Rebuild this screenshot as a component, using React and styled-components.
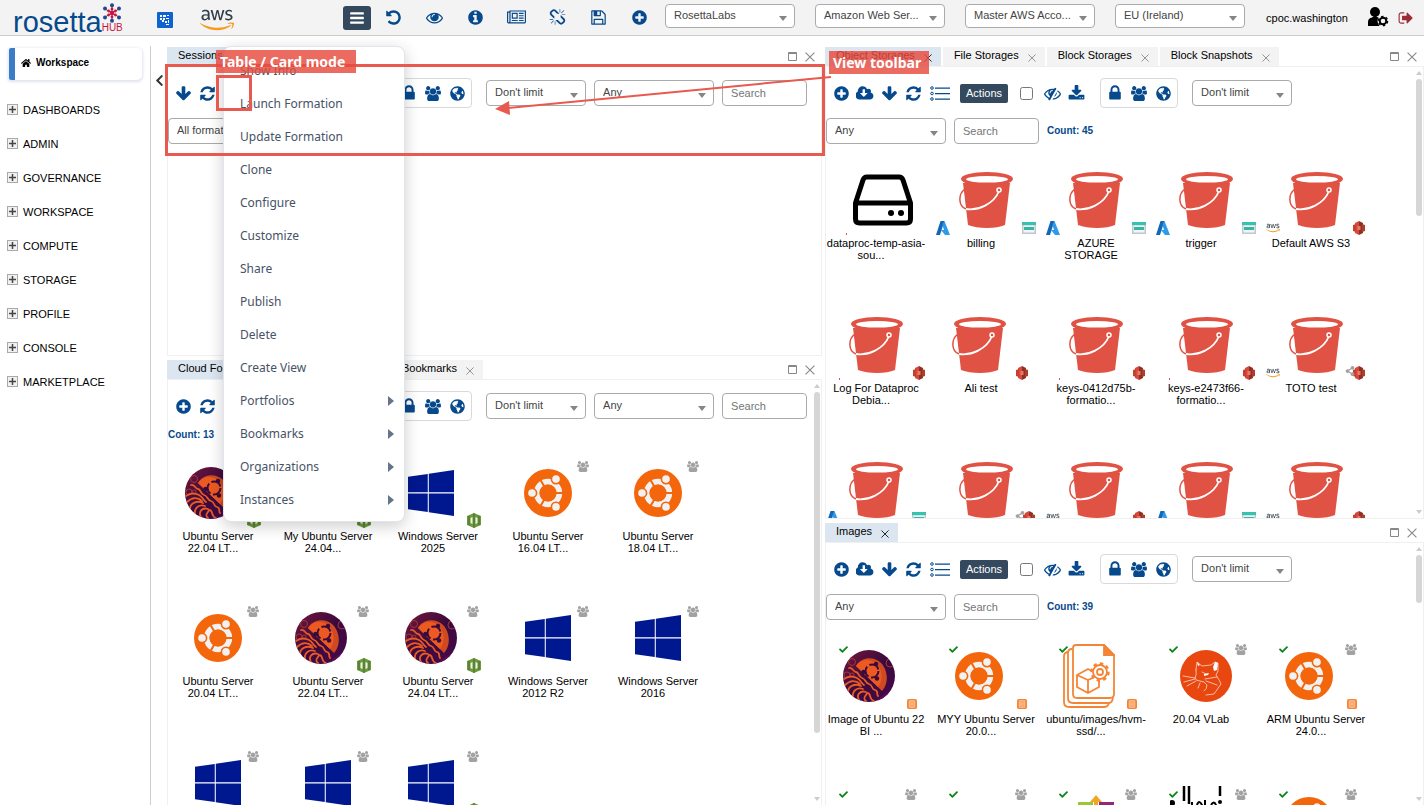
import React from "react";
import styled, { createGlobalStyle, css } from "styled-components";
import { FaAws, FaCheck, FaChevronLeft, FaGlobeAmericas, FaHome, FaShareAlt } from "react-icons/fa";

const blue = "#06498c";
const slate = "#34495e";
const note = "#e8594f";
const crimson = "#c8173f";

const GlobalStyle = createGlobalStyle`
  * { box-sizing: border-box; }
  body { margin: 0; background: #fff; color: #000; font: 11px/12px "Liberation Sans", Arial, sans-serif; }
  button, select, input { font: inherit; margin: 0; }
  button { background: none; border: 0; padding: 0; color: inherit; cursor: pointer; }
`;

/* ---------- icons ---------- */

const disc = "m320-64q0 209-103 385.5t-279.5 279.5-385.5 103-385.5-103-279.5-279.5-103-385.5 103-385.5 279.5-279.5 385.5-103 385.5 103 279.5 279.5 103 385.5z";

const glyphs = {
  plus: [1792, "M1344 960v-128q0-26-19-45t-45-19h-256v-256q0-26-19-45t-45-19h-128q-26 0-45 19t-19 45v256h-256q-26 0-45 19t-19 45v128q0 26 19 45t45 19h256v256q0 26 19 45t45 19h128q26 0 45-19t19-45v-256h256q26 0 45-19t19-45z" + disc],
  undo: [1792, "M1664 896q0 156-61 298t-164 245-245 164-298 61q-172 0-327-72.5t-264-204.5q-7-10-6.5-22.5t8.5-20.5l137-138q10-9 25-9 16 2 23 12 73 95 179 147t225 52q104 0 198.5-40.5t163.5-109.5 109.5-163.5 40.5-198.5-40.5-198.5-109.5-163.5-163.5-109.5-198.5-40.5q-98 0-188 35.5t-160 101.5l137 138q31 30 14 69-17 40-59 40h-448q-26 0-45-19t-19-45v-448q0-42 40-59 39-17 69 14l130 129q107-101 244.5-156.5t284.5-55.5q156 0 298 61t245 164 164 245 61 298z"],
  eye: [1792, "M1664 960q-152-236-381-353 61 104 61 225 0 185-131.5 316.5t-316.5 131.5-316.5-131.5-131.5-316.5q0-121 61-225-229 117-381 353 133 205 333.5 326.5t434.5 121.5 434.5-121.5 333.5-326.5zm-720-384q0-20-14-34t-34-14q-125 0-214.5 89.5t-89.5 214.5q0 20 14 34t34 14 34-14 14-34q0-86 61-147t147-61q20 0 34-14t14-34zm848 384q0 34-20 69-140 230-376.5 368.5t-499.5 138.5-499.5-139-376.5-368q-20-35-20-69t20-69q140-229 376.5-368t499.5-139 499.5 139 376.5 368q20 35 20 69z"],
  info: [1792, "M1152 1376v-160q0-14-9-23t-23-9h-96v-512q0-14-9-23t-23-9h-320q-14 0-23 9t-9 23v160q0 14 9 23t23 9h96v320h-96q-14 0-23 9t-9 23v160q0 14 9 23t23 9h448q14 0 23-9t9-23zm-128-896v-160q0-14-9-23t-23-9h-192q-14 0-23 9t-9 23v160q0 14 9 23t23 9h192q14 0 23-9t9-23zm640 416q0 209-103 385.5t-279.5 279.5-385.5 103-385.5-103-279.5-279.5-103-385.5 103-385.5 279.5-279.5 385.5-103 385.5 103 279.5 279.5 103 385.5z"],
  news: [2048, "M1024 512h-384v384h384v-384zm128 640v128h-640v-128h640zm0-768v640h-640v-640h640zm640 768v128h-512v-128h512zm0-256v128h-512v-128h512zm0-256v128h-512v-128h512zm0-256v128h-512v-128h512zm-1536 960v-960h-128v960q0 26 19 45t45 19 45-19 19-45zm1664 0v-1088h-1536v1088q0 33-11 64h1483q26 0 45-19t19-45zm128-1216v1216q0 80-56 136t-136 56h-1664q-80 0-136-56t-56-136v-1088h256v-128h1792z"],
  unlink: [1792, "M503 1271l-256 256q-10 9-23 9-12 0-23-9-9-10-9-23t9-23l256-256q10-9 23-9t23 9q9 10 9 23t-9 23zm169 41v320q0 14-9 23t-23 9-23-9-9-23v-320q0-14 9-23t23-9 23 9 9 23zm-224-224q0 14-9 23t-23 9h-320q-14 0-23-9t-9-23 9-23 23-9h320q14 0 23 9t9 23zm1264 128q0 120-85 203l-147 146q-83 83-203 83-121 0-204-85l-334-335q-21-21-42-56l239-18 273 274q28 28 68 27.5t68-27.5l147-146q28-28 28-67 0-40-28-68l-274-275 18-239q35 21 56 42l336 336q84 86 84 204zm-617-724l-239 18-273-274q-28-28-68-28-39 0-68 27l-147 146q-28 28-28 67 0 40 28 68l274 274-18 240q-35-21-56-42l-336-336q-84-86-84-204 0-120 85-203l147-146q83-83 203-83 121 0 204 85l334 335q21 21 42 56zm633 84q0 14-9 23t-23 9h-320q-14 0-23-9t-9-23 9-23 23-9h320q14 0 23 9t9 23zm-544-544v320q0 14-9 23t-23 9-23-9-9-23v-320q0-14 9-23t23-9 23 9 9 23zm407 151l-256 256q-11 9-23 9t-23-9q-9-10-9-23t9-23l256-256q10-9 23-9t23 9q9 10 9 23t-9 23z"],
  save: [1792, "M512 1536h768v-384h-768v384zm896 0h128v-896q0-14-10-38.5t-20-34.5l-281-281q-10-10-34-20t-39-10v416q0 40-28 68t-68 28h-576q-40 0-68-28t-28-68v-416h-128v1280h128v-416q0-40 28-68t68-28h832q40 0 68 28t28 68v416zm-384-928v-320q0-13-9.5-22.5t-22.5-9.5h-192q-13 0-22.5 9.5t-9.5 22.5v320q0 13 9.5 22.5t22.5 9.5h192q13 0 22.5-9.5t9.5-22.5zm640 32v928q0 40-28 68t-68 28h-1344q-40 0-68-28t-28-68v-1344q0-40 28-68t68-28h928q40 0 88 20t76 48l280 280q28 28 48 76t20 88z"],
  down: [1792, "M1675 832q0 53-37 90l-651 652q-39 37-91 37-53 0-90-37l-651-652q-38-36-38-90 0-53 38-91l74-75q39-37 91-37 53 0 90 37l294 294v-704q0-52 38-90t90-38h128q52 0 90 38t38 90v704l294-294q37-37 90-37 52 0 91 37l75 75q37 39 37 91z"],
  refresh: [1792, "M1639 1056q0 5-1 7-64 268-268 434.5t-478 166.5q-146 0-282.5-55t-243.5-157l-129 129q-19 19-45 19t-45-19-19-45v-448q0-26 19-45t45-19h448q26 0 45 19t19 45-19 45l-137 137q71 66 161 102t187 36q134 0 250-65t186-179q11-17 53-117 8-23 30-23h192q13 0 22.5 9.5t9.5 22.5zm25-800v448q0 26-19 45t-45 19h-448q-26 0-45-19t-19-45 19-45l138-138q-148-137-349-137-134 0-250 65t-186 179q-11 17-53 117-8 23-30 23h-199q-13 0-22.5-9.5t-9.5-22.5v-7q65-268 270-434.5t480-166.5q146 0 284 55.5t245 156.5l130-129q19-19 45-19t45 19 19 45z"],
  bars: [1792, "M1664 1344v128q0 26-19 45t-45 19h-1408q-26 0-45-19t-19-45v-128q0-26 19-45t45-19h1408q26 0 45 19t19 45zm0-512v128q0 26-19 45t-45 19h-1408q-26 0-45-19t-19-45v-128q0-26 19-45t45-19h1408q26 0 45 19t19 45zm0-512v128q0 26-19 45t-45 19h-1408q-26 0-45-19t-19-45v-128q0-26 19-45t45-19h1408q26 0 45 19t19 45z"],
  lock: [1792, "M640 768h512v-192q0-106-75-181t-181-75-181 75-75 181v192zm832 96v576q0 40-28 68t-68 28h-960q-40 0-68-28t-28-68v-576q0-40 28-68t68-28h32v-192q0-184 132-316t316-132 316 132 132 316v192h32q40 0 68 28t28 68z"],
  users: [1920, "M593 896q-162 5-265 128h-134q-82 0-138-40.5t-56-118.5q0-353 124-353 6 0 43.5 21t97.5 42.5 119 21.5q67 0 133-23-5 37-5 66 0 139 81 256zm1071 637q0 120-73 189.5t-194 69.5h-874q-121 0-194-69.5t-73-189.5q0-53 3.5-103.5t14-109 26.5-108.500 43-97.5 62-81 85.5-53.5 111.5-20q10 0 43 21.5t73 48 107 48 135 21.5 135-21.5 107-48 73-48 43-21.5q61 0 111.500 20t85.5 53.5 62 81 43 97.5 26.5 108.5 14 109 3.5 103.5zm-1024-1277q0 106-75 181t-181 75-181-75-75-181 75-181 181-75 181 75 75 181zm704 384q0 159-112.5 271.5t-271.5 112.5-271.5-112.5-112.5-271.5 112.5-271.5 271.5-112.5 271.5 112.5 112.5 271.5zm576 225q0 78-56 118.5t-138 40.5h-134q-103-123-265-128 81-117 81-256 0-29-5-66 66 23 133 23 59 0 119-21.5t97.5-42.5 43.5-21q124 0 124 353zm-128-609q0 106-75 181t-181 75-181-75-75-181 75-181 181-75 181 75 75 181z"],
  cloud: [1920, "M1216 864q0-14-9-23t-23-9h-224v-352q0-13-9.5-22.5t-22.5-9.5h-192q-13 0-22.5 9.5t-9.5 22.5v352h-224q-13 0-22.5 9.5t-9.5 22.5q0 14 9 23l352 352q9 9 23 9t23-9l351-351q10-12 10-24zm640 288q0 159-112.5 271.5t-271.5 112.5h-1088q-185 0-316.5-131.5t-131.5-316.5q0-130 70-240t188-165q-2-30-2-43 0-212 150-362t362-150q156 0 285.5 87t188.5 231q71-62 166-62 106 0 181 75t75 181q0 76-41 138 130 31 213.5 135.5t83.5 238.5z"],
  hide: [1792, "M555 1335l78-141q-87-63-136-159t-49-203q0-121 61-225-229 117-381 353 167 258 427 375zm389-759q0-20-14-34t-34-14q-125 0-214.5 89.5t-89.5 214.5q0 20 14 34t34 14 34-14 14-34q0-86 61-147t147-61q20 0 34-14t14-34zm363-191q0 7-1 9-106 189-316 567t-315 566l-49 89q-10 16-28 16-12 0-134-70-16-10-16-28 0-12 44-87-143-65-263.5-173t-208.5-245q-20-31-20-69t20-69q153-235 380-371t496-136q89 0 180 17l54-97q10-16 28-16 5 0 18 6t31 15.5 33 18.5 31.5 18.5 19.5 11.5q16 10 16 27zm37 447q0 139-79 253.5t-209 164.5l280-502q8 45 8 84zm448 128q0 35-20 69-39 64-109 145-150 172-347.5 267t-419.5 95l74-132q212-18 392.5-137t301.5-307q-115-179-282-294l63-112q95 64 182.5 153t144.5 184q20 34 20 69z"],
  download: [1792, "M1344 1344q0-26-19-45t-45-19-45 19-19 45 19 45 45 19 45-19 19-45zm256 0q0-26-19-45t-45-19-45 19-19 45 19 45 45 19 45-19 19-45zm128-224v320q0 40-28 68t-68 28h-1472q-40 0-68-28t-28-68v-320q0-40 28-68t68-28h465l135 136q58 56 136 56t136-56l136-136h464q40 0 68 28t28 68zm-325-569q17 41-14 70l-448 448q-18 19-45 19t-45-19l-448-448q-31-29-14-70 17-39 59-39h256v-448q0-26 19-45t45-19h256q26 0 45 19t19 45v448h256q42 0 59 39z"],
  logout: [1792, "M704 1440q0 4 1 20t.5 26.5-3 23.5-10 19.5-20.5 6.5h-320q-119 0-203.5-84.5t-84.5-203.5v-704q0-119 84.5-203.5t203.5-84.5h320q13 0 22.5 9.5t9.5 22.5q0 4 1 20t.5 26.5-3 23.5-10 19.5-20.5 6.5h-320q-66 0-113 47t-47 113v704q0 66 47 113t113 47h312l11.5 1 11.5 3 8 5.5 7 9 2 13.5zm928-544q0 26-19 45l-544 544q-19 19-45 19t-45-19-19-45v-288h-448q-26 0-45-19t-19-45v-384q0-26 19-45t45-19h448v-288q0-26 19-45t45-19 45 19l544 544q19 19 19 45z"],
};

function Glyph({ name, size = 17 }) {
  const [w, d] = glyphs[name];
  return (
    <svg viewBox={`0 0 ${w} 1792`} width={Math.round((size * w) / 1792)} height={size} fill="currentColor" aria-hidden="true">
      <path d={d} />
    </svg>
  );
}

const ListGlyph = () => (
  <svg width="20" height="15" viewBox="0 0 20 15" fill="none" stroke="currentColor" aria-hidden="true">
    <g strokeWidth="1">
      <circle cx="2" cy="2" r="1.3" />
      <circle cx="2" cy="7.5" r="1.3" />
      <circle cx="2" cy="13" r="1.3" />
    </g>
    <path d="M5 2.2h15M5 7.7h15M5 13.2h15" strokeWidth="1.3" />
  </svg>
);

const Cross = ({ size = 8 }) => (
  <svg width={size} height={size} viewBox="0 0 9 9" stroke="currentColor" fill="none" aria-hidden="true">
    <path d="M.5 .5l8 8M8.5 .5l-8 8" />
  </svg>
);

const Maximize = () => (
  <svg width="9" height="9" viewBox="0 0 9 9" fill="none" stroke="currentColor" aria-hidden="true">
    <path d="M.5 .5h8v8h-8zM0 1.5h9" />
  </svg>
);

const AwsTone = () => (
  <svg width="0" height="0" aria-hidden="true">
    <defs>
      <linearGradient id="awsTone" x1="0" y1="0" x2="0" y2="1">
        <stop offset=".62" stopColor="#333e48" />
        <stop offset=".62" stopColor="#f79a1e" />
      </linearGradient>
    </defs>
  </svg>
);

const AwsMark = ({ size }) => <FaAws size={size} fill="url(#awsTone)" aria-hidden="true" />;

const HubFlower = () => (
  <svg width="20" height="20" viewBox="0 0 20 20" aria-hidden="true">
    <g stroke="#c5274e" strokeWidth="1">
      <path d="M10 2v16M3 6l14 8M17 6L3 14" />
    </g>
    <g fill={crimson}>
      <circle cx="10" cy="10" r="2.4" />
      <circle cx="10" cy="6" r="1.4" /><circle cx="10" cy="14" r="1.4" />
      <circle cx="6.6" cy="8" r="1.4" /><circle cx="13.4" cy="8" r="1.4" />
      <circle cx="6.6" cy="12" r="1.4" /><circle cx="13.4" cy="12" r="1.4" />
    </g>
    <g fill="#1d4b8f">
      <circle cx="10" cy="2.2" r="2" /><circle cx="10" cy="17.8" r="2" />
      <circle cx="3" cy="5.5" r="2" /><circle cx="17" cy="5.5" r="2" />
      <circle cx="3" cy="14.5" r="2" /><circle cx="17" cy="14.5" r="2" />
    </g>
  </svg>
);

const PixelMark = () => (
  <svg width="16" height="16" viewBox="0 0 16 16" aria-hidden="true">
    <rect width="16" height="16" rx="1" fill="#0f63d0" />
    <path fill="#fff" d="M3 3h2v2H3zM6 3h3v2H6zM10 3h2v1h-2zM3 6h2v2H3zM6 6h2v2H6zM9 6h3v1H9zM5 8h2v2H5zM8 9h2v2H8zM11 8h1v3h-1zM9 12h3v1H9z" />
  </svg>
);

const UserGear = () => (
  <svg width="21" height="20" viewBox="0 0 21 20" aria-hidden="true">
    <circle cx="7" cy="5" r="5" />
    <path d="M0 19v-4q0-4 4-4.5l3-2 3 2 2 .5-2 4 1.5 4z" />
    <circle cx="15" cy="14" r="5.5" fill="#f3f3f3" />
    <circle cx="15" cy="14" r="3.3" fill="none" stroke="#000" strokeWidth="2" />
    <circle cx="15" cy="14" r="4.6" fill="none" stroke="#000" strokeWidth="1.4" strokeDasharray="2.4 2.4" />
  </svg>
);

/* ---------- card artwork ---------- */

const Ubuntu = () => (
  <svg width="48" height="48" viewBox="-24 -24 48 48" aria-hidden="true">
    <circle r="24" fill="#f4660b" />
    <circle r="11.4" fill="none" stroke="#f1f1f1" strokeWidth="5.6" />
    <g stroke="#f4660b" strokeWidth="2">
      <path d="M0 0h16M0 0L-8 13.9M0 0L-8-13.9" />
    </g>
    <circle r="8.4" fill="#f4660b" />
    <g fill="#f1f1f1" stroke="#f4660b" strokeWidth="1.6">
      <circle cx="-16" cy="0" r="4.6" /><circle cx="8" cy="13.9" r="4.6" /><circle cx="8" cy="-13.9" r="4.6" />
    </g>
  </svg>
);

const Jelly = () => (
  <svg width="52" height="52" viewBox="0 0 52 52" aria-hidden="true">
    <defs>
      <linearGradient id="jellySky" x1="0" y1="0" x2="1" y2="1">
        <stop offset="0" stopColor="#74173c" />
        <stop offset=".5" stopColor="#3b0a3c" />
        <stop offset="1" stopColor="#47094d" />
      </linearGradient>
      <clipPath id="jellyDisc"><circle cx="26" cy="26" r="26" /></clipPath>
    </defs>
    <g clipPath="url(#jellyDisc)">
      <rect width="52" height="52" fill="url(#jellySky)" />
      <g fill="none" stroke="#a3363a">
        <circle cx="9" cy="12" r="3.5" /><circle cx="4" cy="25" r="3" /><circle cx="9" cy="25" r="2" /><circle cx="47" cy="13" r="4" />
      </g>
      <path d="M13 16C18 7 30 6 37 12s10 20 2 29z" fill="#cf4a20" />
      <path d="M13 16C17 9 27 8 33 13s8 17 2 24z" fill="#ec5a22" />
      <g stroke="#3b0a3c" fill="#ec5a22" strokeWidth="2">
        <circle cx="29" cy="21" r="6.5" strokeDasharray="11 2.600" />
      </g>
      <g fill="#3b0a3c">
        <circle cx="20.500" cy="22" r="2.200" /><circle cx="33" cy="14" r="2.200" /><circle cx="34" cy="28.500" r="2.200" />
      </g>
      <path d="M35 49l13-9 4 12H35z" fill="#5d0f4f" />
      <g fill="none" stroke="#e95b25" strokeWidth="1.800" strokeLinecap="round">
        <path d="M6 18c4-1 4 4 7 4s2 5 6 6 3 5 7 6 2 5 6 6 1 4 3 6" />
        <path d="M1 29c4-3 9-3 13-1s4 5 7 7" />
        <path d="M2 35c5-5 11-5 15-1" />
        <path d="M5 42c0-6 7-9 13-6" />
        <path d="M10 47c-1-6 4-10 10-8" />
        <path d="M16 50c-3-5 1-10 7-8" />
        <path d="M23 51c-4-3 0-5 1-8 5 0 1 6 7 8" />
      </g>
    </g>
  </svg>
);

const Windows = () => (
  <svg width="46" height="46" viewBox="0 0 135 135" fill="#00188f" aria-hidden="true">
    <path d="M0 20l58-8v53H0zM61 11l74-11v65H61zM0 69h58v54l-58-8zM61 69h74v66l-74-11z" />
  </svg>
);

const Bucket = () => (
  <svg width="54" height="56" viewBox="0 0 54 56" aria-hidden="true">
    <path d="M4 11l5 42q8 3 19 3t18-3l5-42z" fill="#e05243" />
    <ellipse cx="28" cy="7" rx="26" ry="7" fill="#e05243" />
    <ellipse cx="28" cy="7.3" rx="21" ry="3.3" fill="#fff" />
    <path d="M6 17C-1 22-1 34 7 37" fill="none" stroke="#e05243" strokeWidth="1.5" />
    <path d="M7 37c12 2 28-5 33-18" fill="none" stroke="#fff" strokeWidth="1.8" />
    <circle cx="40" cy="18" r="2" fill="#e05243" stroke="#fff" strokeWidth="1.5" />
  </svg>
);

const Drive = () => (
  <svg width="62" height="52" viewBox="0 0 62 52" fill="none" stroke="#000" strokeWidth="5" strokeLinejoin="round" aria-hidden="true">
    <path d="M3.5 29L11 6q1-3 4-3h32q3 0 4 3l7.5 23v16q0 4-4 4h-47q-4 0-4-4zM3.5 29h55" />
    <g fill="#000" stroke="none">
      <circle cx="39" cy="39" r="3" /><circle cx="49" cy="39" r="3" />
    </g>
  </svg>
);

const DocStack = () => (
  <svg width="52" height="64" viewBox="0 0 52 64" fill="none" stroke="#f58536" strokeWidth="1.8" aria-hidden="true">
    <path d="M6 8q-5 0-5 4v46q0 5 5 5h35q4 0 5-4" />
    <path d="M9 5q-4 0-4 4v45q0 5 5 5h36q3 0 4-5" />
    <path d="M13 1h28l10 10v39q0 4-4 4H14q-4 0-4-4V4q0-3 3-3z" fill="#fff" />
    <path d="M41 1v10h10z" fill="#f58536" />
    <path d="M14 31l11-6 11 6v12l-11 6-11-6zM14 31l11 5 11-5M25 36v13" />
    <circle cx="37" cy="28" r="8.5" fill="#fff" strokeWidth="2.4" strokeDasharray="3.4 3.2" />
    <circle cx="37" cy="28" r="7" fill="#fff" />
    <circle cx="37" cy="28" r="3" />
  </svg>
);

const Lynx = () => (
  <svg width="52" height="52" viewBox="0 0 52 52" aria-hidden="true">
    <circle cx="26" cy="26" r="26" fill="#e8470f" />
    <g fill="none" stroke="#fbd9cb" strokeWidth=".8" strokeLinecap="round" strokeLinejoin="round">
      <path d="M16 20l1-8 5 4 9-1 4-3 3 1 0 8-2 4q4 6 5 9l-7 10-8 1" />
      <path d="M16 20q1 5-1 8 1 3 5 3l4 1 3 3q0 4-3 6" />
      <path d="M3 26l12 2M4 32l11-3M7 36l9-5M25 29l12-2M26 31l11 4M22 22l4 2M20 33l-2 5" />
    </g>
    <path d="M33 17l2-5 3 1-1 7-3 1zM24 24l5-1-1 2-4 1zM17 12l3 3-2 1z" fill="#fff" />
  </svg>
);

const Blocks = () => (
  <svg width="36" height="52" viewBox="0 0 36 52" aria-hidden="true">
    <path d="M18 0l6 7H12z" fill="#efa724" /><path d="M16 6h4v6h-4z" fill="#efa724" />
    <path d="M0 7h15v16H0z" fill="#9bc832" /><path d="M21 7h15v16H21z" fill="#962678" />
    <path d="M4 11h8M24 11h8" stroke="#fff" strokeWidth="2" />
    <path d="M0 28h16v16H0z" fill="#262577" /><path d="M20 28h16v16H20z" fill="#efa724" />
  </svg>
);

const Script = () => (
  <svg width="72" height="72" viewBox="0 0 72 72" fill="none" stroke="#000" aria-hidden="true">
    <path d="M14 1v15M19 1v18M50 1v10" strokeWidth="2.5" />
    <path d="M27 20q2-6 5 0v12M35 15v12M41 20q3-5 5 0v10M22 17v15M3 24v40" strokeWidth="2" />
    <circle cx="2" cy="18" r="3" fill="#000" stroke="none" />
    <circle cx="50" cy="17" r="2" fill="#000" stroke="none" />
  </svg>
);

const Blank = () => null;

const art = { ubuntu: Ubuntu, jelly: Jelly, windows: Windows, bucket: Bucket, drive: Drive, docs: DocStack, lynx: Lynx, blocks: Blocks, script: Script, none: Blank };

const badges = {
  azure: () => (
    <svg width="14" height="14" viewBox="0 0 14 14" aria-hidden="true">
      <path d="M4.5 0h4L4 14H0z" fill="#1268b8" /><path d="M8.5 0L14 14H9L5 9h3L6.5 4z" fill="#2f9be8" />
    </svg>
  ),
  storage: () => (
    <svg width="14" height="12" viewBox="0 0 14 12" aria-hidden="true">
      <path d="M0 0h14v12H0z" fill="#c3c7c7" /><path d="M0 0h14v3H0z" fill="#35c2b0" />
      <path d="M1.5 3.5h11v7h-11z" fill="#f1f4f4" /><path d="M2 5h10v3H2z" fill="#35b5a6" />
    </svg>
  ),
  s3: () => (
    <svg width="12" height="14" viewBox="0 0 12 14" aria-hidden="true">
      <path d="M2 2l4-2v14l-4-2z" fill="#d9483a" /><path d="M10 2L6 0v14l4-2z" fill="#8c3123" />
      <path d="M0 4l3-1v8l-3-1z" fill="#c5412f" /><path d="M12 4l-3-1v8l3-1z" fill="#b03c2c" />
      <path d="M4.5 5h3v4h-3z" fill="#e8786b" />
    </svg>
  ),
  green: () => (
    <svg width="14" height="15" viewBox="0 0 14 15" aria-hidden="true">
      <path d="M0 3l7-3 7 3v9l-7 3-7-3z" fill="#6a9a3c" />
      <path d="M3.5 5l2-1v7l-2-1zM8.500 4l2 1v5l-2 1z" fill="#eef5e4" />
      <path d="M12 3v9M7 0v15M2 3v9" stroke="#4b612c" strokeWidth=".8" />
    </svg>
  ),
  volume: () => (
    <svg width="10" height="10" viewBox="0 0 9 9" aria-hidden="true">
      <rect width="9" height="9" rx="1.5" fill="#f58536" />
      <path d="M2 1.5h5v6H2zM2 4.500h5M4 3h1M4 6h1" fill="#f9a468" stroke="#fbc9a2" strokeWidth=".7" />
    </svg>
  ),
  aws: () => <AwsMark size={14} />,
  dot: () => (
    <svg width="14" height="14" viewBox="0 0 14 14" aria-hidden="true"><path d="M13 12h1v2h-1z" fill="#e05243" /></svg>
  ),
};

/* ---------- shell ---------- */

const Page = styled.div`
  display: flex;
  flex-direction: column;
  height: 100vh;
  overflow: hidden;
`;

const Header = styled.header`
  display: flex;
  align-items: center;
  flex: none;
  height: 36px;
  padding: 0 10px 0 13px;
  background: #f3f3f3;
  border-bottom: 1px solid #ccc;
`;

const Logo = styled.a`
  display: flex;
  align-items: flex-end;
  align-self: flex-end;
  width: 144px;
  color: ${blue};
  text-decoration: none;
  font-size: 29px;
  line-height: 26px;
`;

const LogoHub = styled.span`
  display: flex;
  flex-direction: column;
  align-items: center;
  padding-bottom: 2px;
  color: ${crimson};
  font-size: 10px;
  line-height: 10px;
`;

const Brands = styled.div`
  display: flex;
  align-items: center;
  gap: 27px;
  width: 186px;
  padding-top: 4px;
`;

const HeaderTools = styled.nav`
  display: flex;
  align-items: center;
  gap: 17px;
  margin-right: 14px;
  color: ${blue};
`;

const IconButton = styled.button`
  display: flex;
  align-items: center;
  justify-content: center;
  flex: none;
  width: ${(p) => p.$width || 24}px;
  height: 24px;
  color: ${blue};
`;

const MenuButton = styled(IconButton)`
  width: 28px;
  margin-right: -7px;
  color: #fff;
  background: ${slate};
  border-radius: 3px;
`;

const SignOutButton = styled(IconButton)`
  width: 16px;
  color: #9b2c35;
`;

const HeaderSelects = styled.div`
  display: flex;
  gap: 20px;
  margin-bottom: 3px;
`;

const Account = styled.div`
  display: flex;
  align-items: center;
  margin-left: auto;
  gap: 9px;
`;

const UserName = styled.span`
  margin-right: 11px;
`;

const SelectWrap = styled.span`
  position: relative;
  display: block;
  flex: none;
  width: ${(p) => p.$width}px;
  &::after {
    content: "";
    position: absolute;
    right: 8px;
    top: 50%;
    border: 4px solid transparent;
    border-top: 5px solid #858585;
    border-bottom: 0;
    pointer-events: none;
  }
`;

const SelectBox = styled.select`
  display: block;
  width: 100%;
  height: ${(p) => p.$height}px;
  padding: 0 20px 2px 8px;
  appearance: none;
  color: #444;
  background: #fff;
  border: 1px solid #aaa;
  border-radius: 4px;
`;

const Select = ({ label, value, width, height = 26 }) => (
  <SelectWrap $width={width}>
    <SelectBox aria-label={label} $height={height}>
      <option>{value}</option>
    </SelectBox>
  </SelectWrap>
);

const SearchInput = styled.input`
  width: 85px;
  height: 26px;
  padding: 0 8px;
  border: 1px solid #aaa;
  border-radius: 4px;
  background: #fff;
  &::placeholder { color: #757575; }
`;

const Main = styled.div`
  display: flex;
  flex: 1;
  min-height: 0;
  padding-top: 10px;
`;

const Sidebar = styled.aside`
  flex: none;
  width: 151px;
  padding: 2px 8px 0 6px;
  border-right: 1px solid #ccc;
`;

const SidebarHome = styled.a`
  display: flex;
  align-items: center;
  gap: 5px;
  height: 32px;
  padding: 0 0 2px 6px;
  margin-left: 3px;
  color: #000;
  font-size: 10px;
  font-weight: bold;
  text-decoration: none;
  border-left: 6px solid #3a7cc8;
  border-radius: 2px 5px 5px 2px;
  box-shadow: 0 1px 3px 1px #dfe3ee;
`;

const NavList = styled.ul`
  margin: 13px 0 0;
  padding: 0;
  list-style: none;
`;

const NavItem = styled.button`
  display: flex;
  align-items: center;
  gap: 5px;
  width: 100%;
  height: 34px;
  padding-left: 1px;
`;

const ExpandBox = styled.svg`
  flex: none;
  margin-bottom: 2px;
  border: 1px solid #a9a9a9;
  background: #f1f1f1;
`;

const Collapse = styled.button`
  flex: none;
  align-self: flex-start;
  width: 16px;
  height: 70px;
  color: #333;
`;

const Columns = styled.main`
  display: grid;
  flex: 1;
  min-width: 0;
  grid-template-columns: minmax(0, 655fr) minmax(0, 599fr);
  gap: 3px;
`;

const Column = styled.div`
  display: grid;
  min-height: 0;
  grid-template-rows: minmax(0, ${(p) => p.$top}fr) minmax(0, ${(p) => p.$bottom}fr);
  gap: 3px;
`;

/* ---------- panels ---------- */

const PanelFrame = styled.section`
  position: relative;
  display: flex;
  flex-direction: column;
  min-height: 0;
`;

const TabBar = styled.div`
  display: flex;
  flex: none;
  gap: 2px;
  height: 20px;
  padding-top: 1px;
`;

const Tab = styled.div`
  display: flex;
  align-items: flex-start;
  gap: 9px;
  min-width: ${(p) => p.$min || 0}px;
  padding: 2px 9px 0 11px;
  background: ${(p) => (p.$active ? "#dce6f0" : "#f3f3f3")};
`;

const TabClose = styled.button`
  display: flex;
  padding-top: 5px;
  color: ${(p) => (p.$active ? "#111" : "#888")};
`;

const PanelControls = styled.div`
  display: flex;
  align-items: center;
  gap: 8px;
  margin-left: auto;
  padding-right: 7px;
  color: #888;
  button { display: flex; }
`;

const PanelBody = styled.div`
  display: flex;
  flex: 1;
  min-height: 0;
  overflow: hidden;
  border: 1px solid #f0f0f0;
  ${(p) => p.$cut && css`border-bottom: 0;`}
`;

const PanelContent = styled.div`
  flex: 1;
  min-width: 0;
  padding-top: 11px;
`;

const ScrollBar = styled.div`
  display: flex;
  flex-direction: column;
  align-items: center;
  flex: none;
  width: 8px;
  padding: 4px 0;
`;

const ScrollArrow = styled.span`
  border: 3px solid transparent;
  border-top: 0;
  border-bottom: 4px solid #ccc;
  ${(p) => p.$down && css`transform: rotate(180deg);`}
`;

const ScrollTrack = styled.span`
  flex: 1;
  width: 6px;
  margin: 4px 0;
`;

const ScrollThumb = styled.span`
  display: block;
  height: ${(p) => p.$size}%;
  border-radius: 3px;
  background: #d6d6d6;
`;

const Toolbar = styled.div`
  display: flex;
  flex-wrap: wrap;
  align-items: center;
  gap: ${(p) => p.$rowGap || 10}px 8px;
`;

const Tools = styled.div`
  display: flex;
  align-items: center;
  margin: 0 6px 0 3px;
`;

const ActionsButton = styled.button`
  height: 19px;
  margin: 0 12px 0 6px;
  padding: 0 6px;
  color: #fff;
  background: ${slate};
  border-radius: 2px;
`;

const SelectAll = styled.input`
  width: 13px;
  height: 13px;
  margin: 0 7px 0 0;
`;

const VisibilityBox = styled.div`
  display: flex;
  align-items: center;
  height: 30px;
  margin-left: 12px;
  padding: 0 2px;
  border: 1px solid #d9d9d9;
  border-radius: 4px;
`;

const Count = styled.span`
  color: ${blue};
  font-size: 10px;
  font-weight: bold;
`;

const toolLabels = { plus: "Add", cloud: "Import", down: "Sort", refresh: "Refresh" };

const PanelTools = ({ start }) => (
  <Tools>
    {start.map((name) => (
      <IconButton key={name} aria-label={toolLabels[name]}><Glyph name={name} /></IconButton>
    ))}
    <IconButton $width={29} aria-label="Table view"><ListGlyph /></IconButton>
    <ActionsButton>Actions</ActionsButton>
    <SelectAll type="checkbox" aria-label="Select all" />
    <IconButton aria-label="Hide"><Glyph name="hide" /></IconButton>
    <IconButton aria-label="Download"><Glyph name="download" /></IconButton>
    <VisibilityBox>
      <IconButton aria-label="Private"><Glyph name="lock" size={18} /></IconButton>
      <IconButton aria-label="Shared"><Glyph name="users" size={15} /></IconButton>
      <IconButton aria-label="Public"><FaGlobeAmericas size={15} /></IconButton>
    </VisibilityBox>
  </Tools>
);

function Panel({ tabs, scroll, cut, children, overlay }) {
  return (
    <PanelFrame>
      <TabBar>
        {tabs.map(([name, min], i) => (
          <Tab key={name} $active={i === 0} $min={min}>
            <span>{name}</span>
            <TabClose $active={i === 0} aria-label={`Close ${name}`}><Cross /></TabClose>
          </Tab>
        ))}
        <PanelControls>
          <button aria-label="Maximize"><Maximize /></button>
          <button aria-label="Close panel"><Cross size={10} /></button>
        </PanelControls>
      </TabBar>
      <PanelBody $cut={cut}>
        <PanelContent>{children}</PanelContent>
        {scroll && (
          <ScrollBar>
            <ScrollArrow />
            <ScrollTrack><ScrollThumb $size={scroll} /></ScrollTrack>
            <ScrollArrow $down />
          </ScrollBar>
        )}
      </PanelBody>
      {overlay}
    </PanelFrame>
  );
}

/* ---------- cards ---------- */

const CardGrid = styled.div`
  display: grid;
  grid-template-columns: repeat(auto-fill, 100px);
  grid-auto-rows: 145px;
  column-gap: 10px;
  margin-top: ${(p) => p.$top}px;
`;

const CardFrame = styled.figure`
  position: relative;
  margin: 0;
`;

const CardArt = styled.div`
  display: flex;
  align-items: flex-end;
  justify-content: center;
  height: 72px;
`;

const ArtBox = styled.div`
  display: flex;
  align-items: center;
  justify-content: center;
  flex: none;
  width: 72px;
  height: 72px;
`;

const Badge = styled.span`
  display: flex;
  align-items: center;
  justify-content: center;
  flex: none;
  width: 14px;
  height: 15px;
  margin-bottom: 1px;
`;

const Caption = styled.figcaption`
  margin-top: 1px;
  text-align: center;
  white-space: nowrap;
  &::after { content: ""; display: inline-block; width: 10px; }
`;

const SharedMark = styled.span`
  position: absolute;
  top: 4px;
  right: 9px;
  display: flex;
  color: #a2a2a2;
`;

const LinkMark = styled(SharedMark)`
  top: 57px;
  right: 11px;
`;

const CheckMark = styled(SharedMark)`
  top: 5px;
  left: 13px;
  right: auto;
  color: #0a8418;
`;

function Card({ kind, title, left, right, shared, linked, checked }) {
  const Art = art[kind];
  const Left = badges[left];
  const Right = badges[right];
  return (
    <CardFrame>
      <CardArt>
        {Left && <Badge><Left /></Badge>}
        <ArtBox><Art /></ArtBox>
        {Right && <Badge><Right /></Badge>}
      </CardArt>
      <Caption>
        {title.map((line, i) => (
          <React.Fragment key={line}>{i > 0 && <br />}{line}</React.Fragment>
        ))}
      </Caption>
      {shared && <SharedMark><Glyph name="users" size={11} /></SharedMark>}
      {linked && <LinkMark><FaShareAlt size={10} /></LinkMark>}
      {checked && <CheckMark><FaCheck size={9} /></CheckMark>}
    </CardFrame>
  );
}

const Cards = ({ items, top }) => (
  <CardGrid $top={top}>{items.map((c, i) => <Card key={i} {...c} />)}</CardGrid>
);

const formations = [
  { kind: "jelly", title: ["Ubuntu Server", "22.04 LT..."], right: "green" },
  { kind: "jelly", title: ["My Ubuntu Server", "24.04..."], right: "green" },
  { kind: "windows", title: ["Windows Server", "2025"], right: "green" },
  { kind: "ubuntu", title: ["Ubuntu Server", "16.04 LT..."], shared: true },
  { kind: "ubuntu", title: ["Ubuntu Server", "18.04 LT..."], shared: true },
  { kind: "ubuntu", title: ["Ubuntu Server", "20.04 LT..."], shared: true },
  { kind: "jelly", title: ["Ubuntu Server", "22.04 LT..."], right: "green", shared: true },
  { kind: "jelly", title: ["Ubuntu Server", "24.04 LT..."], right: "green", shared: true },
  { kind: "windows", title: ["Windows Server", "2012 R2"], shared: true },
  { kind: "windows", title: ["Windows Server", "2016"], shared: true },
  { kind: "windows", title: [], shared: true },
  { kind: "windows", title: [], shared: true },
  { kind: "windows", title: [], right: "green", shared: true },
];

const storages = [
  { kind: "drive", title: ["dataproc-temp-asia-", "sou..."], left: "dot" },
  { kind: "bucket", title: ["billing"], left: "azure", right: "storage" },
  { kind: "bucket", title: ["AZURE", "STORAGE"], left: "azure", right: "storage" },
  { kind: "bucket", title: ["trigger"], left: "azure", right: "storage" },
  { kind: "bucket", title: ["Default AWS S3"], left: "aws", right: "s3" },
  { kind: "bucket", title: ["Log For Dataproc", "Debia..."], left: "dot", right: "s3" },
  { kind: "bucket", title: ["Ali test"], right: "s3" },
  { kind: "bucket", title: ["keys-0412d75b-", "formatio..."], left: "dot", right: "s3" },
  { kind: "bucket", title: ["keys-e2473f66-", "formatio..."], left: "dot", right: "s3" },
  { kind: "bucket", title: ["TOTO test"], left: "aws", right: "s3", linked: true },
  { kind: "bucket", title: [], left: "azure", right: "storage" },
  { kind: "bucket", title: [], left: "dot", right: "s3", linked: true },
  { kind: "bucket", title: [], left: "aws", right: "s3" },
  { kind: "bucket", title: [], left: "azure", right: "storage" },
  { kind: "bucket", title: [], left: "aws", right: "s3" },
];

const images = [
  { kind: "jelly", title: ["Image of Ubuntu 22", "BI ..."], right: "volume", checked: true },
  { kind: "ubuntu", title: ["MYY Ubuntu Server", "20.0..."], right: "volume", checked: true },
  { kind: "docs", title: ["ubuntu/images/hvm-", "ssd/..."], right: "volume", checked: true },
  { kind: "lynx", title: ["20.04 VLab"], checked: true, shared: true },
  { kind: "ubuntu", title: ["ARM Ubuntu Server", "24.0..."], right: "volume", checked: true, shared: true },
  { kind: "none", title: [], checked: true, shared: true },
  { kind: "none", title: [], checked: true, shared: true },
  { kind: "blocks", title: [], checked: true, shared: true },
  { kind: "script", title: [], checked: true, shared: true },
  { kind: "ubuntu", title: [], right: "volume", checked: true, shared: true },
];

/* ---------- context menu and callouts ---------- */

const ContextMenu = styled.div`
  position: absolute;
  z-index: 2;
  top: 0;
  left: 56px;
  width: 182px;
  padding: 7px 0 5px;
  background: #fff;
  border: 1px solid #e0e5ee;
  border-radius: 8px;
  box-shadow: 0 4px 16px rgba(0, 0, 0, 0.2);
`;

const ContextItem = styled.button`
  display: flex;
  align-items: center;
  justify-content: space-between;
  width: 100%;
  height: 33px;
  padding: 0 10px 0 16px;
  color: #475266;
  font-family: "Noto Sans", sans-serif;
  font-size: 12px;
  ${(p) => p.$more && css`
    &::after { content: ""; border: 5px solid transparent; border-left: 6px solid #64748b; border-right: 0; }
  `}
`;

const Callout = styled.div`
  position: absolute;
  z-index: 3;
  pointer-events: none;
`;

const ToolbarFrame = styled(Callout)`
  top: 18px;
  left: -2px;
  right: -3px;
  height: 92px;
  border: 3px solid ${note};
`;

const ButtonFrame = styled(Callout)`
  top: 29px;
  left: 49px;
  width: 36px;
  height: 36px;
  border: 3px solid ${note};
`;

const CalloutLabel = styled(Callout)`
  padding: 0 8px 0 4px;
  color: #fff;
  background: rgba(230, 74, 62, 0.82);
  font: bold 14px/23px "Noto Sans", sans-serif;
  white-space: nowrap;
`;

const ModeLabel = styled(CalloutLabel)`
  top: 4px;
  left: 49px;
  padding-right: 11px;
`;

const ViewLabel = styled(CalloutLabel)`
  top: 5px;
  left: calc(100% + 7px);
`;

const Arrow = styled.svg`
  position: absolute;
  z-index: 3;
  top: 30px;
  right: -9px;
  pointer-events: none;
`;

const menuItems = ["Show Info", "Launch Formation", "Update Formation", "Clone", "Configure", "Customize", "Share", "Publish", "Delete", "Create View"];
const subMenus = ["Portfolios", "Bookmarks", "Organizations", "Instances"];

const SessionOverlay = () => (
  <>
    <ContextMenu>
      {menuItems.map((m) => <ContextItem key={m}>{m}</ContextItem>)}
      {subMenus.map((m) => <ContextItem key={m} $more>{m}</ContextItem>)}
    </ContextMenu>
    <ToolbarFrame />
    <ButtonFrame />
    <ModeLabel>Table / Card mode</ModeLabel>
    <ViewLabel>View toolbar</ViewLabel>
    <Arrow width="336" height="42" viewBox="0 0 336 42" aria-hidden="true">
      <path d="M336 1L12 32" stroke={note} strokeWidth="2" />
      <path d="M0 33l14-8 1 14z" fill={note} />
    </Arrow>
  </>
);

/* ---------- page ---------- */

const sections = ["DASHBOARDS", "ADMIN", "GOVERNANCE", "WORKSPACE", "COMPUTE", "STORAGE", "PROFILE", "CONSOLE", "MARKETPLACE"];
const headerTools = [["undo", "Undo"], ["eye", "Preview"], ["info", "Information"], ["news", "News"], ["unlink", "Unlink"], ["save", "Save"], ["plus", "New"]];
const headerSelects = [["Organization", "RosettaLabs"], ["Provider", "Amazon Web Ser..."], ["Account", "Master AWS Acco..."], ["Region", "EU (Ireland)"]];

export default function App() {
  return (
    <Page>
      <GlobalStyle />
      <Header>
        <Logo href="#home">
          rosetta
          <LogoHub><HubFlower />HUB</LogoHub>
        </Logo>
        <Brands><PixelMark /><AwsMark size={34} /><AwsTone /></Brands>
        <HeaderTools>
          <MenuButton aria-label="Menu"><Glyph name="bars" size={16} /></MenuButton>
          {headerTools.map(([name, label]) => (
            <IconButton key={name} aria-label={label}><Glyph name={name} /></IconButton>
          ))}
        </HeaderTools>
        <HeaderSelects>
          {headerSelects.map(([label, value]) => <Select key={label} label={label} value={value} width={130} height={24} />)}
        </HeaderSelects>
        <Account>
          <UserName>cpoc.washington</UserName>
          <button aria-label="User settings"><UserGear /></button>
          <SignOutButton aria-label="Sign out"><Glyph name="logout" size={16} /></SignOutButton>
        </Account>
      </Header>
      <Main>
        <Sidebar>
          <SidebarHome href="#workspace"><FaHome size={10} />Workspace</SidebarHome>
          <NavList>
            {sections.map((s) => (
              <li key={s}>
                <NavItem>
                  <ExpandBox width="11" height="11" viewBox="0 0 9 9" aria-hidden="true">
                    <path d="M1 4.500h7M4.500 1v7" stroke="#444" strokeWidth="1.5" />
                  </ExpandBox>
                  {s}
                </NavItem>
              </li>
            ))}
          </NavList>
        </Sidebar>
        <Collapse aria-label="Collapse sidebar"><FaChevronLeft size={13} /></Collapse>
        <Columns>
          <Column $top={310} $bottom={446}>
            <Panel tabs={[["Sessions"]]} overlay={<SessionOverlay />}>
              <Toolbar>
                <PanelTools start={["down", "refresh"]} />
                <Select label="Limit" value="Don't limit" width={100} />
                <Select label="Filter" value="Any" width={120} />
                <SearchInput placeholder="Search" aria-label="Search" />
                <Select label="Formations" value="All formations" width={120} />
              </Toolbar>
            </Panel>
            <Panel tabs={[["Cloud Formations", 222], ["Bookmarks"]]} scroll={85} cut>
              <Toolbar $rowGap={8}>
                <PanelTools start={["plus", "refresh"]} />
                <Select label="Limit" value="Don't limit" width={100} />
                <Select label="Filter" value="Any" width={120} />
                <SearchInput placeholder="Search" aria-label="Search" />
                <Count>Count: 13</Count>
              </Toolbar>
              <Cards items={formations} top={16} />
            </Panel>
          </Column>
          <Column $top={473} $bottom={283}>
            <Panel tabs={[["Object Storages"], ["File Storages"], ["Block Storages"], ["Block Snapshots"]]} scroll={32}>
              <Toolbar>
                <PanelTools start={["plus", "cloud", "down", "refresh"]} />
                <Select label="Limit" value="Don't limit" width={100} />
                <Select label="Filter" value="Any" width={120} />
                <SearchInput placeholder="Search" aria-label="Search" />
                <Count>Count: 45</Count>
              </Toolbar>
              <Cards items={storages} top={20} />
            </Panel>
            <Panel tabs={[["Images"]]} scroll={20} cut>
              <Toolbar>
                <PanelTools start={["plus", "cloud", "down", "refresh"]} />
                <Select label="Limit" value="Don't limit" width={100} />
                <Select label="Filter" value="Any" width={120} />
                <SearchInput placeholder="Search" aria-label="Search" />
                <Count>Count: 39</Count>
              </Toolbar>
              <Cards items={images} top={20} />
            </Panel>
          </Column>
        </Columns>
      </Main>
    </Page>
  );
}
